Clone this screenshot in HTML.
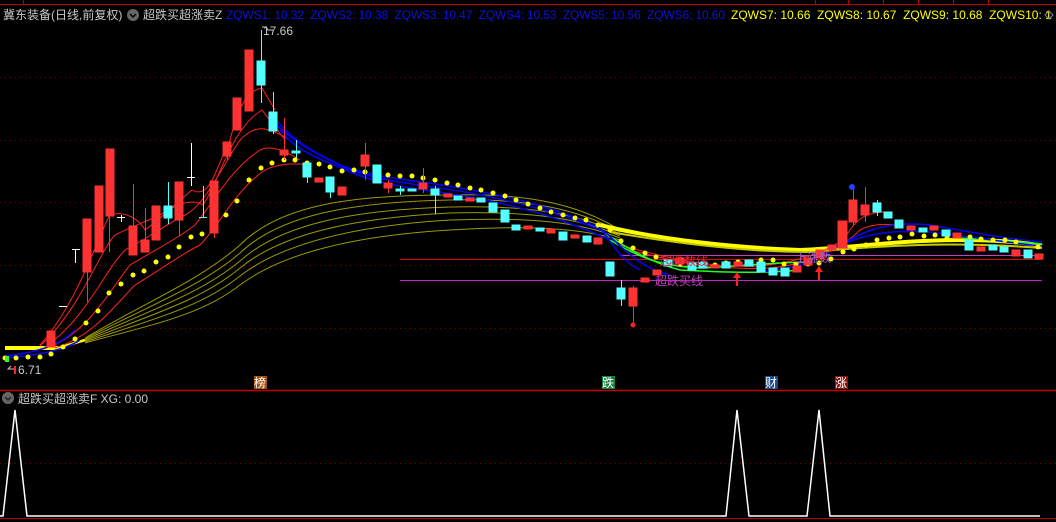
<!DOCTYPE html>
<html><head><meta charset="utf-8"><style>
html,body{margin:0;padding:0;background:#000;width:1056px;height:522px;overflow:hidden}
svg{display:block}
text{font-family:"Liberation Sans","Noto Sans CJK SC",sans-serif;font-size:12px}
</style></head><body>
<svg width="1056" height="522" viewBox="0 0 1056 522" xmlns="http://www.w3.org/2000/svg">
<rect width="1056" height="522" fill="#000"/>
<line x1="0" y1="4.5" x2="1056" y2="4.5" stroke="#c00000"/>
<g stroke="#c00000"><line x1="23.5" y1="0" x2="23.5" y2="4"/><line x1="815.5" y1="0" x2="815.5" y2="4"/><line x1="848.5" y1="0" x2="848.5" y2="4"/><line x1="883.5" y1="0" x2="883.5" y2="4"/><line x1="918.5" y1="0" x2="918.5" y2="4"/><line x1="953.5" y1="0" x2="953.5" y2="4"/><line x1="988.5" y1="0" x2="988.5" y2="4"/></g>
<text x="3" y="19" fill="#c8c8c8">冀东装备(日线,前复权)</text>
<circle cx="133" cy="15" r="6" fill="#666"/><path d="M130 14l3 3 3-3" stroke="#000" stroke-width="1.5" fill="none"/>
<text x="143" y="19" fill="#c8c8c8">超跌买超涨卖Z</text>
<text x="226" y="19" fill="#1010e0" xml:space="preserve" textLength="499">ZQWS1: 10.32  ZQWS2: 10.38  ZQWS3: 10.47  ZQWS4: 10.53  ZQWS5: 10.56  ZQWS6: 10.60</text>
<text x="731" y="19" fill="#ffff00" xml:space="preserve">ZQWS7: 10.66  ZQWS8: 10.67  ZQWS9: 10.68  ZQWS10: 1</text>
<path d="M1049 11l4 4-4 4-4-4z" stroke="#888" fill="none"/>
<g stroke="#800000" stroke-dasharray="1,4"><line x1="0" y1="77.5" x2="1056" y2="77.5"/><line x1="0" y1="140.5" x2="1056" y2="140.5"/><line x1="0" y1="202.5" x2="1056" y2="202.5"/><line x1="0" y1="265.5" x2="1056" y2="265.5"/><line x1="0" y1="328.5" x2="1056" y2="328.5"/><line x1="0" y1="463.5" x2="1056" y2="463.5"/></g>
<g stroke="#9a9a00" fill="none" stroke-width="1">
<path d="M85 338 C150 300 200 280 240 245 C280 205 350 195 450 195 C530 193 580 205 620 230"/>
<path d="M85 339 C150 305 200 287 240 253 C280 215 350 202 450 200 C530 198 580 210 620 232"/>
<path d="M85 340 C150 310 200 294 240 261 C280 225 350 210 450 207 C530 205 580 214 620 234"/>
<path d="M85 341 C150 315 200 301 240 268 C280 235 350 218 450 213 C530 211 580 218 620 236"/>
<path d="M85 342 C150 320 200 308 240 276 C280 245 350 226 450 220 C530 217 580 222 620 238"/>
<path d="M85 343 C150 325 200 316 240 285 C280 255 350 236 450 230 C530 225 580 228 620 240"/>
</g>
<path d="M5 348 L60 348" stroke="#ffff00" stroke-width="4" fill="none"/>
<path d="M58 348 L85 340" stroke="#ffff00" stroke-width="2.5" fill="none"/>
<path d="M600 225 C660 240 740 248 800 250 C850 248 900 240 960 240 C1000 240 1030 243 1042 246" stroke="#ffff00" stroke-width="4" fill="none"/>
<path d="M610 232 C680 244 750 252 810 252 C900 244 960 242 1042 248" stroke="#c8c800" stroke-width="2" fill="none"/>
<line x1="400" y1="259.5" x2="1042" y2="259.5" stroke="#e00000"/>
<line x1="620" y1="255.5" x2="1042" y2="255.5" stroke="#c040c0"/>
<line x1="400" y1="280.5" x2="1042" y2="280.5" stroke="#c020c0"/>
<g stroke="#ff2020" fill="none" stroke-width="1">
<path d="M40 345 C80 300 100 230 110 215 C125 210 140 220 145 230 C165 215 180 200 192 190 C210 200 215 170 230 140 C240 100 250 90 262 88 L275 110"/>
<path d="M40 346 C80 310 100 250 115 235 C135 225 150 220 160 215 C175 205 190 198 203 205 C220 180 230 130 262 110 L285 140"/>
<path d="M45 347 C85 320 105 270 125 250 C145 240 165 225 185 215 C205 205 220 170 240 140 C255 125 265 125 290 140"/>
<path d="M50 347 C90 330 110 290 130 265 C155 250 175 240 195 225 C215 200 230 170 260 150 C270 145 285 150 300 160"/>
<path d="M55 348 C95 335 115 305 135 285 C160 270 180 255 200 245 C220 225 235 190 265 170 C280 163 295 163 310 165"/>
<path d="M620 245 C680 262 720 268 760 266 C800 262 830 250 845 238 C855 220 865 212 885 212"/>
<path d="M630 250 C690 266 730 270 770 268 C810 264 840 250 860 230 C875 222 890 225 900 225"/>
</g>
<g stroke="#20ff20" fill="none" stroke-width="1.5">
<path d="M600 230 C630 250 650 262 680 270 C720 272 760 274 800 270"/>
<path d="M610 240 C640 258 660 266 700 268 C740 266 780 262 810 262"/>
<path d="M960 238 C990 240 1020 242 1042 244"/>
</g>
<g stroke="#0000ff" fill="none" stroke-width="1.5">
<path d="M5 356 C40 352 60 345 75 330"/>
<path d="M5 358 C40 355 65 350 80 340"/>
<path d="M270 112 C290 140 310 150 340 165 C380 180 420 180 460 188 C520 198 560 210 600 228 C610 240 620 260 640 270"/>
<path d="M270 118 C295 145 320 155 345 168 C385 183 425 185 465 192 C525 203 565 215 605 232 C625 250 640 268 670 275"/>
<path d="M280 130 C300 155 325 160 350 172 C390 188 430 190 470 197 C530 208 570 222 610 240"/>
<path d="M840 246 C870 225 900 222 930 225 C970 232 1000 238 1042 242"/>
<path d="M830 250 C865 232 895 230 930 232 C970 236 1000 242 1042 246"/>
<path d="M760 272 C790 270 810 262 830 252"/>
</g>
<g fill="#ffff00">
<circle cx="5" cy="358" r="2.5"/><circle cx="16" cy="358" r="2.5"/><circle cx="28" cy="357" r="2.5"/><circle cx="40" cy="357" r="2.5"/><circle cx="51" cy="354" r="2.5"/><circle cx="63" cy="347" r="2.5"/><circle cx="75" cy="339" r="2.5"/><circle cx="86" cy="323" r="2.5"/><circle cx="98" cy="311" r="2.5"/><circle cx="109" cy="293" r="2.5"/><circle cx="121" cy="284" r="2.5"/><circle cx="133" cy="275" r="2.5"/><circle cx="144" cy="271" r="2.5"/><circle cx="156" cy="262" r="2.5"/><circle cx="168" cy="257" r="2.5"/><circle cx="179" cy="247" r="2.5"/><circle cx="191" cy="237" r="2.5"/><circle cx="202" cy="234" r="2.5"/><circle cx="214" cy="228" r="2.5"/><circle cx="226" cy="215" r="2.5"/><circle cx="237" cy="201" r="2.5"/><circle cx="249" cy="180" r="2.5"/><circle cx="261" cy="168" r="2.5"/><circle cx="272" cy="163" r="2.5"/><circle cx="284" cy="160" r="2.5"/><circle cx="295" cy="160" r="2.5"/><circle cx="307" cy="163" r="2.5"/><circle cx="319" cy="164" r="2.5"/><circle cx="330" cy="167" r="2.5"/><circle cx="342" cy="171" r="2.5"/><circle cx="354" cy="170" r="2.5"/><circle cx="365" cy="172" r="2.5"/><circle cx="377" cy="172" r="2.5"/><circle cx="388" cy="175" r="2.5"/><circle cx="400" cy="176" r="2.5"/><circle cx="412" cy="176" r="2.5"/><circle cx="423" cy="178" r="2.5"/><circle cx="435" cy="180" r="2.5"/><circle cx="447" cy="183" r="2.5"/><circle cx="458" cy="185" r="2.5"/><circle cx="470" cy="188" r="2.5"/><circle cx="481" cy="190" r="2.5"/><circle cx="493" cy="193" r="2.5"/><circle cx="505" cy="196" r="2.5"/><circle cx="516" cy="200" r="2.5"/><circle cx="528" cy="204" r="2.5"/><circle cx="540" cy="208" r="2.5"/><circle cx="551" cy="212" r="2.5"/><circle cx="563" cy="215" r="2.5"/><circle cx="575" cy="218" r="2.5"/><circle cx="586" cy="220" r="2.5"/><circle cx="598" cy="225" r="2.5"/><circle cx="610" cy="230" r="2.5"/><circle cx="621" cy="241" r="2.5"/><circle cx="633" cy="248" r="2.5"/><circle cx="645" cy="253" r="2.5"/><circle cx="656" cy="257" r="2.5"/><circle cx="668" cy="262" r="2.5"/><circle cx="680" cy="264" r="2.5"/><circle cx="691" cy="266" r="2.5"/><circle cx="703" cy="264" r="2.5"/><circle cx="715" cy="265" r="2.5"/><circle cx="726" cy="263" r="2.5"/><circle cx="738" cy="262" r="2.5"/><circle cx="750" cy="262" r="2.5"/><circle cx="761" cy="260" r="2.5"/><circle cx="773" cy="260" r="2.5"/><circle cx="784" cy="264" r="2.5"/><circle cx="796" cy="264" r="2.5"/><circle cx="808" cy="264" r="2.5"/><circle cx="819" cy="263" r="2.5"/><circle cx="831" cy="259" r="2.5"/><circle cx="843" cy="252" r="2.5"/><circle cx="854" cy="249" r="2.5"/><circle cx="866" cy="245" r="2.5"/><circle cx="877" cy="240" r="2.5"/><circle cx="889" cy="238" r="2.5"/><circle cx="900" cy="237" r="2.5"/><circle cx="912" cy="234" r="2.5"/><circle cx="924" cy="236" r="2.5"/><circle cx="935" cy="235" r="2.5"/><circle cx="947" cy="238" r="2.5"/><circle cx="958" cy="235" r="2.5"/><circle cx="970" cy="237" r="2.5"/><circle cx="981" cy="239" r="2.5"/><circle cx="993" cy="240" r="2.5"/><circle cx="1005" cy="240" r="2.5"/><circle cx="1016" cy="242" r="2.5"/><circle cx="1038" cy="247" r="2.5"/>
</g>
<g>
<g fill="#ff3232" stroke="#ff3232">
<rect x="47" y="331" width="8" height="16"/><line x1="87.5" y1="272" x2="87.5" y2="302"/><rect x="83" y="219" width="8" height="53"/><rect x="95" y="186" width="8" height="66"/><rect x="106" y="149" width="8" height="67"/><line x1="109.5" y1="215" x2="109.5" y2="252"/>
<line x1="133.5" y1="184" x2="133.5" y2="226"/><rect x="129" y="226" width="8" height="29"/><line x1="145.5" y1="208" x2="145.5" y2="252"/><rect x="141" y="240" width="8" height="12"/><rect x="152" y="206" width="8" height="34"/><line x1="179.5" y1="220" x2="179.5" y2="236"/><rect x="175" y="182" width="8" height="38"/><line x1="214.5" y1="233" x2="214.5" y2="238"/><rect x="210" y="181" width="8" height="52"/><line x1="227.5" y1="155" x2="227.5" y2="160"/><rect x="223" y="142" width="8" height="14"/><rect x="233" y="98" width="8" height="32"/><rect x="245" y="50" width="8" height="61"/>
<line x1="284.5" y1="118" x2="284.5" y2="160"/><rect x="280" y="150" width="8" height="5"/><rect x="315" y="178" width="8" height="4"/><rect x="338" y="187" width="8" height="8"/><line x1="365.5" y1="143" x2="365.5" y2="180"/><rect x="361" y="155" width="8" height="11"/><line x1="388.5" y1="180" x2="388.5" y2="193"/><rect x="384" y="183" width="8" height="5"/><line x1="423.5" y1="168" x2="423.5" y2="193"/><rect x="419" y="183" width="8" height="6"/><rect x="444" y="194" width="8" height="3"/><rect x="466" y="198" width="8" height="3"/><rect x="524" y="226" width="8" height="3"/><rect x="547" y="229" width="8" height="4"/><rect x="571" y="235" width="8" height="3"/><rect x="594" y="238" width="8" height="6"/>
<line x1="633.5" y1="286" x2="633.5" y2="326"/><rect x="629" y="288" width="8" height="18"/><rect x="641" y="278" width="8" height="4"/><rect x="653" y="270" width="8" height="5"/><rect x="676" y="258" width="8" height="6"/><rect x="711" y="265" width="8" height="3"/><rect x="734" y="262" width="8" height="4"/><rect x="793" y="266" width="8" height="6"/><rect x="804" y="258" width="8" height="7"/><rect x="816" y="250" width="8" height="8"/><rect x="828" y="245" width="8" height="5"/><rect x="838" y="221" width="9" height="27"/><line x1="853.5" y1="188" x2="853.5" y2="225"/><rect x="849" y="200" width="8" height="22"/><line x1="865.5" y1="187" x2="865.5" y2="222"/><rect x="861" y="205" width="8" height="10"/><rect x="907" y="226" width="8" height="4"/><rect x="930" y="226" width="8" height="4"/><rect x="953" y="233" width="8" height="5"/><rect x="977" y="247" width="8" height="4"/><rect x="1012" y="250" width="8" height="6"/><rect x="1035" y="254" width="8" height="5"/>
</g>
<g fill="#54ffff" stroke="#54ffff">
<line x1="168.5" y1="182" x2="168.5" y2="224"/><rect x="164" y="206" width="8" height="12"/><line x1="203.5" y1="186" x2="203.5" y2="218"/><line x1="199" y1="217.5" x2="207" y2="217.5"/>
<line x1="261.5" y1="30" x2="261.5" y2="103"/><rect x="257" y="61" width="8" height="24"/><line x1="273.5" y1="92" x2="273.5" y2="134"/><rect x="269" y="112" width="8" height="19"/><line x1="296.5" y1="140" x2="296.5" y2="158"/><rect x="292" y="151" width="8" height="2"/><rect x="303" y="163" width="8" height="14"/><line x1="307.5" y1="177" x2="307.5" y2="183"/><rect x="326" y="177" width="8" height="15"/><line x1="330.5" y1="192" x2="330.5" y2="198"/><rect x="373" y="165" width="8" height="18"/><line x1="400.5" y1="186" x2="400.5" y2="195"/><rect x="396" y="189" width="8" height="2"/><rect x="408" y="189" width="8" height="2"/><line x1="435.5" y1="186" x2="435.5" y2="214"/><rect x="431" y="189" width="8" height="6"/><rect x="454" y="196" width="8" height="4"/><rect x="477" y="198" width="8" height="4"/><rect x="489" y="203" width="8" height="9"/><rect x="501" y="210" width="8" height="12"/><rect x="512" y="225" width="8" height="5"/><rect x="536" y="228" width="8" height="3"/><rect x="559" y="232" width="8" height="8"/><rect x="583" y="236" width="8" height="6"/>
<rect x="606" y="262" width="8" height="14"/><line x1="621.5" y1="280" x2="621.5" y2="306"/><rect x="617" y="288" width="8" height="11"/><rect x="664" y="260" width="8" height="6"/><rect x="688" y="263" width="8" height="7"/><rect x="699" y="262" width="8" height="6"/><rect x="722" y="262" width="8" height="6"/><rect x="745" y="260" width="8" height="6"/><rect x="757" y="262" width="8" height="10"/><rect x="769" y="268" width="8" height="7"/><rect x="781" y="268" width="8" height="8"/><line x1="877.5" y1="200" x2="877.5" y2="216"/><rect x="873" y="203" width="8" height="9"/><rect x="884" y="212" width="8" height="6"/><rect x="895" y="220" width="8" height="8"/><rect x="919" y="228" width="8" height="4"/><rect x="942" y="230" width="8" height="6"/><rect x="965" y="240" width="8" height="10"/><rect x="989" y="245" width="8" height="5"/><rect x="1000" y="247" width="8" height="5"/><rect x="1024" y="250" width="8" height="8"/>
</g>
<g stroke="#fff"><line x1="59" y1="306.5" x2="67" y2="306.5"/><line x1="72" y1="249.5" x2="80" y2="249.5"/><line x1="75.5" y1="249" x2="75.5" y2="263"/><line x1="117" y1="217.5" x2="125" y2="217.5"/><line x1="121.5" y1="215" x2="121.5" y2="222"/><line x1="187" y1="177.5" x2="195" y2="177.5"/><line x1="191.5" y1="143" x2="191.5" y2="186"/></g>
</g>
<circle cx="852" cy="187" r="3" fill="#2040ff"/>
<circle cx="633" cy="325" r="2.5" fill="#ff2020"/>
<path d="M737 272l-4 6h3v8h2v-8h3z" fill="#ff2020"/>
<path d="M819 266l-4 6h3v8h2v-8h3z" fill="#ff2020"/>
<text x="660" y="265" fill="#e02040" font-size="11">起跌数线</text>
<text x="655" y="285" fill="#c040c0" font-size="11">超跌买线</text>
<text x="795" y="262" fill="#a060c0" font-size="11">上涨数</text>
<text x="263" y="35" fill="#c8c8c8">17.66</text>
<path d="M262 27h4l2 3h5" stroke="#c8c8c8" fill="none"/>
<text x="18" y="374" fill="#c8c8c8">6.71</text>
<path d="M16 369h-8l3-3" stroke="#c8c8c8" fill="none"/>
<rect x="5" y="356" width="4" height="6" fill="#20ff20"/><rect x="14" y="366" width="2" height="8" fill="#ff2020"/>
<rect x="254" y="376" width="13" height="13" fill="#a05010"/><text x="254" y="387" fill="#fff">榜</text>
<rect x="602" y="376" width="13" height="13" fill="#1a8040"/><text x="602" y="387" fill="#fff">跌</text>
<rect x="765" y="376" width="13" height="13" fill="#1a4a8a"/><text x="765" y="387" fill="#fff">财</text>
<rect x="835" y="376" width="13" height="13" fill="#901010"/><text x="835" y="387" fill="#fff">涨</text>
<line x1="0" y1="390.5" x2="1056" y2="390.5" stroke="#c00000" stroke-width="1.5"/>
<circle cx="8" cy="398" r="6" fill="#666"/><path d="M5 397l3 3 3-3" stroke="#222" stroke-width="1.5" fill="none"/>
<text x="18" y="403" fill="#c8c8c8">超跌买超涨卖F  XG: 0.00</text>
<path d="M0 516 L3 516 L15 410 L27 516 L726 516 L737 410 L749 516 L807 516 L819 410 L830 516 L1040 516" stroke="#fff" fill="none" stroke-width="1.5"/>
<line x1="0" y1="518.5" x2="1056" y2="518.5" stroke="#c00000"/>
</svg>
</body></html>
